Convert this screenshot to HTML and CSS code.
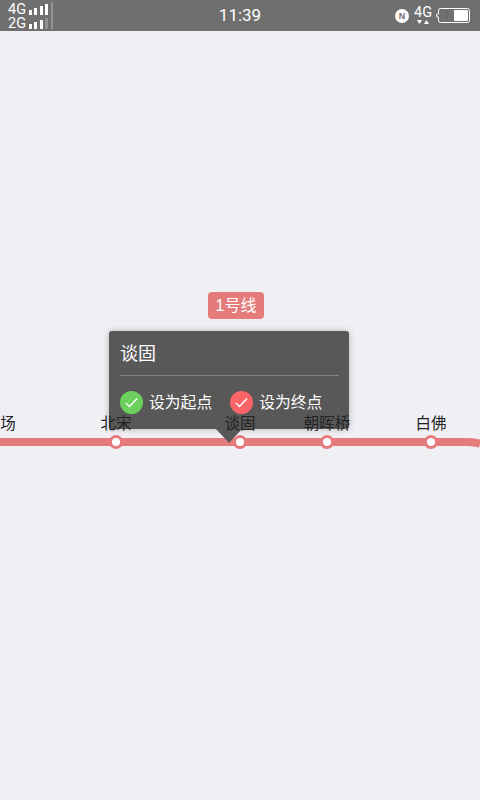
FILE: index.html
```html
<!DOCTYPE html>
<html lang="zh">
<head>
<meta charset="utf-8">
<title>1号线</title>
<link rel="stylesheet" href="styles.css">
</head>
<body>
<div class="phone">
  <header class="status">
    <div class="nets">
      <div class="net"><span class="net-t">4G</span><span class="bars"><i class="b1"></i><i class="b2"></i><i class="b3"></i><i class="b4"></i></span></div>
      <div class="net"><span class="net-t">2G</span><span class="bars"><i class="b1"></i><i class="b2"></i><i class="b3"></i><i class="b4 dim"></i></span></div>
      <span class="sep"></span>
    </div>
    <div class="clock">11:39</div>
    <div class="right">
      <span class="nfc">N</span>
      <span class="net4g"><span class="net4g-t">4G</span>
        <svg class="arrows" width="12" height="4" viewBox="0 0 12 4"><path d="M0 0h5L2.500 4zM7 4h5L9.500 0z" fill="#fff"/></svg>
      </span>
      <svg class="battery" width="34" height="15" viewBox="0 0 34 15">
        <path d="M4.500 .500H31.500a2 2 0 0 1 2 2v10a2 2 0 0 1-2 2H4.500a2 2 0 0 1-2-2v-3.500L.500 8.500v-2L2.500 6V2.500a2 2 0 0 1 2-2z" fill="none" stroke="#fff"/>
        <rect x="18" y="2" width="14" height="11" rx="1" fill="#fff"/>
      </svg>
    </div>
  </header>
  <main class="map">
    <svg class="line" width="480" height="20" viewBox="0 0 480 20"><path d="M0 6H466Q472 6 480 7.500" fill="none" stroke="#e57b7b" stroke-width="8"/></svg>
    <div class="badge">1号线</div>
    <section class="pop">
      <h1 class="pop-title">谈固</h1>
      <div class="pop-actions">
        <div class="act">
          <span class="dot green"><svg width="13" height="11" viewBox="0 0 13 11"><path d="M1 6l3.500 3.500L12 1.500" fill="none" stroke="#fff" stroke-width="1.400"/></svg></span>
          <span>设为起点</span>
        </div>
        <div class="act">
          <span class="dot red"><svg width="13" height="11" viewBox="0 0 13 11"><path d="M1 6l3.500 3.500L12 1.500" fill="none" stroke="#fff" stroke-width="1.400"/></svg></span>
          <span>设为终点</span>
        </div>
      </div>
      <span class="tip"></span>
    </section>
    <span class="lbl l1">场</span><span class="lbl l2">北宋</span><span class="lbl l3">谈固</span><span class="lbl l4">朝晖桥</span><span class="lbl l5">白佛</span>
    <span class="stop s1"></span><span class="stop s2"></span><span class="stop s3"></span><span class="stop s4"></span>
  </main>
</div>
</body>
</html>
```
FILE: styles.css
```css
* { box-sizing: border-box; }
html, body { margin: 0; padding: 0; }
body { background: #efeff4; font-family: "Liberation Sans", "Noto Sans CJK SC", sans-serif; }
.phone { width: 480px; height: 800px; display: flex; flex-direction: column; overflow: hidden; }

.status { height: 31px; flex: none; background: #6f6f6f; color: #fff; display: grid; grid-template-columns: 1fr auto 1fr; align-items: center; }
.nets { position: relative; height: 31px; padding: 3px 0 0 8px; display: flex; flex-direction: column; }
.net { display: flex; align-items: flex-end; gap: 5px; height: 14px; }
.net-t { font-family: "Roboto", sans-serif; font-size: 14.500px; line-height: 14px; width: 16px; }
.bars { display: flex; align-items: flex-end; gap: 2.330px; height: 12px; margin-bottom: 2px; }
.bars i { display: block; width: 3px; background: #fff; }
.bars .b1 { height: 5px; }
.bars .b2 { height: 7px; }
.bars .b3 { height: 9px; }
.bars .b4 { height: 11px; }
.bars .dim { background: #929292; }
.sep { position: absolute; left: 51px; top: 2px; width: 2px; height: 27px; background: #929292; }
.clock { font-family: "Roboto", sans-serif; font-size: 17px; line-height: 31px; }
.right { display: flex; justify-content: flex-end; align-items: center; }
.nfc { width: 14px; height: 14px; border-radius: 50%; background: #fff; color: #6f6f6f; font: bold 9px/14px "Liberation Sans", sans-serif; text-align: center; margin-right: 5px; }
.net4g { display: flex; flex-direction: column; align-items: center; width: 18px; margin: 0 4px 1px 0; }
.net4g-t { font-family: "Roboto", sans-serif; font-size: 14.500px; line-height: 14px; }
.arrows { display: block; }
.battery { display: block; margin-right: 10px; }

.map { position: relative; flex: 1; }
.line { position: absolute; left: 0; top: 405px; }
.badge { position: absolute; left: 208px; top: 261px; width: 56px; height: 27px; border-radius: 4px; background: #e57b7b; color: #fff; font-size: 16px; line-height: 27px; text-align: center; }
.pop { position: absolute; left: 109px; top: 300px; width: 240px; height: 98px; border-radius: 3px; background: #585858; color: #fff; padding: 0 10px 0 11px; box-shadow: 0 0 6px rgba(0,0,0,.25); }
.pop-title { margin: 0; height: 45px; border-bottom: 1px solid #858585; font-size: 18px; font-weight: 400; line-height: 46px; }
.pop-actions { display: flex; gap: 18px; margin-top: 15px; font-size: 15.800px; line-height: 23px; }
.act { display: flex; align-items: center; gap: 6px; }
.dot { width: 23px; height: 23px; border-radius: 50%; display: flex; align-items: center; justify-content: center; }
.green { background: #6cd05c; }
.red { background: #fc6568; }
.tip { position: absolute; left: 107px; top: 98px; width: 0; height: 0; border-left: 13px solid transparent; border-right: 13px solid transparent; border-top: 14px solid #585858; }
.lbl { position: absolute; top: 382px; font-size: 15.500px; line-height: 22px; color: #222; white-space: nowrap; transform: translateX(-50%); }
.l1 { left: 8px; }
.l2 { left: 116px; }
.l3 { left: 240px; }
.l4 { left: 327px; }
.l5 { left: 431px; }
.stop { position: absolute; top: 404px; width: 14px; height: 14px; margin-left: -7px; border-radius: 50%; background: #fff; border: 3px solid #e57b7b; }
.s1 { left: 116px; }
.s2 { left: 240px; }
.s3 { left: 327px; }
.s4 { left: 431px; }
```
